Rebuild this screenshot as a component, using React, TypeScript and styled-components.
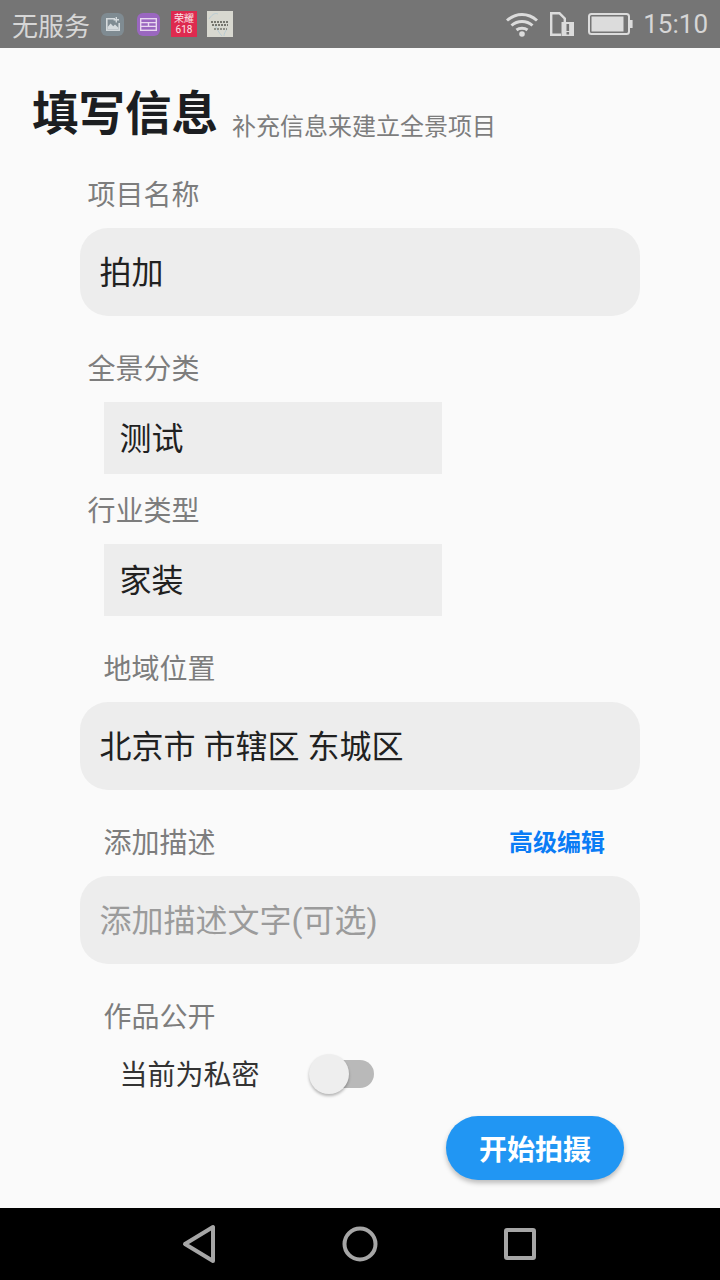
import React, { FunctionComponent } from 'react';
import styled, { createGlobalStyle } from 'styled-components';

const GlobalStyle = createGlobalStyle`
  html, body {
    margin: 0;
    padding: 0;
    background: #000;
  }
  * {
    box-sizing: border-box;
  }
`;

export const App: FunctionComponent<{}> = () => (
  <Screen>
    <GlobalStyle />
    <StatusBar>
      <StatusGroup>
        <Carrier>无服务</Carrier>
        <GalleryBadge>
          <svg width="14" height="14" viewBox="0 0 14 14">
            <path d="M0 1h9v1.6H1.6v9.8h10.8V6H14v8H0z" fill="#d5dadd" />
            <path d="M1.6 12.4V10l3-3.4 2.6 2.6 1.8-1.6 3.4 3.2v1.6z" fill="#d5dadd" />
            <path d="M11 0v2h2v1.4h-2v2H9.6v-2h-2V2h2V0z" fill="#d5dadd" />
          </svg>
        </GalleryBadge>
        <ListBadge>
          <svg width="17" height="13" viewBox="0 0 17 13" fill="none" stroke="#e8d8f0" strokeWidth="1.4">
            <rect x="0.7" y="0.7" width="15.6" height="11.6" />
            <path d="M0.7 4.6h15.6M0.7 8.4h15.6M8.5 4.6v3.8" />
          </svg>
        </ListBadge>
        <PromoBadge>
          <PromoLine>荣耀</PromoLine>
          <PromoLine>618</PromoLine>
        </PromoBadge>
        <ThumbBadge>
          <svg width="26" height="26" viewBox="0 0 26 26" fill="none">
            <path d="M2 8c4-6 7-6 9-5M8 14c2 4 4 8 7 11M20 18c-2 3-3 5-3 7" stroke="#b9ccd4" strokeWidth="1" />
            <path d="M4 11h18M5 14h16" stroke="#55554f" strokeWidth="1.6" strokeDasharray="2 1" />
            <path d="M7 18h13" stroke="#77776f" strokeWidth="1.4" strokeDasharray="2 1" />
          </svg>
        </ThumbBadge>
      </StatusGroup>
      <StatusGroup>
        <svg width="34" height="26" viewBox="0 0 34 26" fill="none" stroke="#dcdcdc" strokeWidth="3">
          <path d="M2 9.5c9-8 21-8 30 0" />
          <path d="M6.5 14.5c6-5.4 15-5.4 21 0" />
          <path d="M11.5 19c3-2.4 8-2.4 11 0" />
          <circle cx="17" cy="23" r="2.8" fill="#dcdcdc" stroke="none" />
        </svg>
        <SimIcon width="26" height="26" viewBox="0 0 26 26">
          <path d="M1 1h10l6 6v4h-2.4V8l-4.6-4.6H3.4v19.2H12V25H1z" fill="#dcdcdc" />
          <path d="M12.5 11H25v14H12.5z" fill="#dcdcdc" />
          <path d="M17.5 13h2.6v7h-2.6zM17.5 21h2.6v2.4h-2.6z" fill="#757575" />
        </SimIcon>
        <BatteryIcon width="46" height="22" viewBox="0 0 46 22">
          <rect x="2" y="1" width="40" height="20" rx="2.5" fill="none" stroke="#dcdcdc" strokeWidth="2" />
          <rect x="4.5" y="3.5" width="32" height="15" fill="#dcdcdc" />
          <path d="M43 7h2.6v8H43z" fill="#dcdcdc" />
        </BatteryIcon>
        <Clock>15:10</Clock>
      </StatusGroup>
    </StatusBar>

    <Content>
      <Header>
        <Title>填写信息</Title>
        <Subtitle>补充信息来建立全景项目</Subtitle>
      </Header>

      <FieldLabel $indent={88}>项目名称</FieldLabel>
      <InputPill>拍加</InputPill>

      <FieldLabel $indent={88} $gap={32}>全景分类</FieldLabel>
      <SelectBox>测试</SelectBox>

      <FieldLabel $indent={88} $gap={16}>行业类型</FieldLabel>
      <SelectBox>家装</SelectBox>

      <FieldLabel $indent={104} $gap={32}>地域位置</FieldLabel>
      <InputPill>北京市 市辖区 东城区</InputPill>

      <LabelRow>
        <FieldLabel $indent={104}>添加描述</FieldLabel>
        <EditLink>高级编辑</EditLink>
      </LabelRow>
      <InputPill $placeholder>添加描述文字(可选)</InputPill>

      <FieldLabel $indent={104} $gap={32}>作品公开</FieldLabel>
      <SwitchRow>
        <SwitchText>当前为私密</SwitchText>
        <SwitchTrack>
          <SwitchThumb />
        </SwitchTrack>
      </SwitchRow>

      <ActionRow>
        <StartButton>开始拍摄</StartButton>
      </ActionRow>
    </Content>

    <NavBar>
      <NavSlot>
        <svg width="36" height="40" viewBox="0 0 36 40" fill="none" stroke="#a6a6a6" strokeWidth="4" strokeLinejoin="round">
          <path d="M31 3v34L3 20z" />
        </svg>
      </NavSlot>
      <NavSlot>
        <svg width="36" height="36" viewBox="0 0 36 36" fill="none" stroke="#a6a6a6" strokeWidth="4">
          <circle cx="18" cy="18" r="15.5" />
        </svg>
      </NavSlot>
      <NavSlot>
        <svg width="32" height="32" viewBox="0 0 32 32" fill="none" stroke="#a6a6a6" strokeWidth="4" strokeLinejoin="round">
          <rect x="2" y="2" width="28" height="28" rx="1" />
        </svg>
      </NavSlot>
    </NavBar>
  </Screen>
);

const Screen = styled.div`
  display: flex;
  flex-direction: column;
  width: 720px;
  height: 1280px;
  overflow: hidden;
  font-family: Roboto, 'Noto Sans CJK SC', sans-serif;
`;

const StatusBar = styled.div`
  display: flex;
  flex: 0 0 48px;
  align-items: center;
  justify-content: space-between;
  padding: 0 12px;
  background: #757575;
`;

const StatusGroup = styled.div`
  display: flex;
  align-items: center;
`;

const Carrier = styled.span`
  margin-right: 11px;
  font-size: 26px;
  color: #d6d6d6;
`;

const RoundBadge = styled.div`
  display: flex;
  align-items: center;
  justify-content: center;
  width: 23px;
  height: 23px;
  border-radius: 6px;
`;

const GalleryBadge = styled(RoundBadge)`
  background: #7f8b92;
`;

const ListBadge = styled(RoundBadge)`
  margin-left: 13px;
  background: #9a67c0;
`;

const PromoBadge = styled.div`
  display: flex;
  flex-direction: column;
  align-items: center;
  justify-content: center;
  width: 26px;
  height: 26px;
  margin-left: 11px;
  background: #de2a4f;
`;

const PromoLine = styled.span`
  font-size: 10px;
  line-height: 11px;
  color: #fbe4e8;
`;

const ThumbBadge = styled.div`
  width: 26px;
  height: 26px;
  margin-left: 10px;
  background: #d8d8d0;
`;

const SimIcon = styled.svg`
  margin-left: 10px;
`;

const BatteryIcon = styled.svg`
  margin-left: 12px;
`;

const Clock = styled.span`
  margin-left: 10px;
  font-size: 26px;
  color: #d6d6d6;
`;

const Content = styled.div`
  flex: 1;
  padding-top: 42px;
  background: #fafafa;
`;

const Header = styled.div`
  display: flex;
  align-items: flex-start;
  height: 84px;
  padding-left: 32px;
`;

const Title = styled.h1`
  margin: 0;
  font-size: 46.5px;
  line-height: 48px;
  font-weight: 700;
  color: #1c1e21;
`;

const Subtitle = styled.span`
  margin: 21px 0 0 14px;
  font-size: 24px;
  line-height: 32px;
  color: #7d7d7d;
`;

const FieldLabel = styled.div<{ $indent: number; $gap?: number }>`
  height: 40px;
  margin-top: ${(props) => props.$gap ?? 0}px;
  padding-left: ${(props) => props.$indent - 0.5}px;
  font-size: 28px;
  line-height: 44px;
  color: #7d7d7d;
`;

const LabelRow = styled.div`
  display: flex;
  align-items: center;
  justify-content: space-between;
  margin-top: 32px;
  padding-right: 115px;
`;

const EditLink = styled.span`
  margin-bottom: 4px;
  font-size: 24px;
  font-weight: 700;
  color: #0a7cf5;
`;

const InputPill = styled.div<{ $placeholder?: boolean }>`
  display: flex;
  align-items: center;
  width: 560px;
  height: 88px;
  margin: 14px 0 0 80px;
  padding: 0 0 4px 19.5px;
  border-radius: 28px;
  font-size: 32px;
  background: #ededed;
  color: ${(props) => (props.$placeholder ? '#9b9b9b' : '#212121')};
`;

const SelectBox = styled.div`
  display: flex;
  align-items: center;
  width: 338px;
  height: 72px;
  margin: 14px 0 0 104px;
  padding: 0 0 4px 15.5px;
  font-size: 32px;
  background: #ededed;
  color: #212121;
`;

const SwitchRow = styled.div`
  display: flex;
  align-items: center;
  height: 40px;
  margin-top: 18px;
  padding-left: 119.5px;
`;

const SwitchText = styled.span`
  margin-bottom: 2px;
  font-size: 28px;
  color: #333333;
`;

const SwitchTrack = styled.div`
  position: relative;
  width: 56px;
  height: 28px;
  margin: 0 0 0 58.5px;
  border-radius: 14px;
  background: #b9b9b9;
`;

const SwitchThumb = styled.div`
  position: absolute;
  top: -6px;
  left: -9px;
  width: 40px;
  height: 40px;
  border-radius: 50%;
  background: #eeeeee;
  box-shadow: 0 2px 3px rgba(0, 0, 0, 0.28);
`;

const ActionRow = styled.div`
  display: flex;
  justify-content: flex-end;
  margin-top: 22px;
  padding-right: 96px;
`;

const StartButton = styled.button`
  width: 178px;
  height: 64px;
  padding: 0;
  border: none;
  border-radius: 32px;
  font-family: inherit;
  font-size: 28px;
  font-weight: 700;
  color: #ffffff;
  background: #2196f3;
  box-shadow: 0 3px 5px rgba(0, 0, 0, 0.25);
`;

const NavBar = styled.div`
  display: grid;
  flex: 0 0 72px;
  grid-template-columns: repeat(3, 160px);
  align-items: center;
  justify-items: center;
  padding-left: 120px;
  background: #000000;
`;

const NavSlot = styled.div`
  display: flex;
  align-items: center;
  justify-content: center;
  height: 72px;
`;

export default App;
